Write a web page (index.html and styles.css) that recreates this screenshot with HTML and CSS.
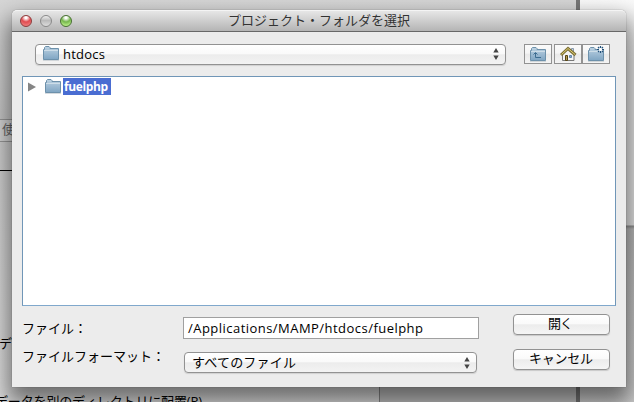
FILE: index.html
```html
<!DOCTYPE html>
<html lang="ja">
<head>
<meta charset="utf-8">
<title>プロジェクト・フォルダを選択</title>
<link rel="stylesheet" href="styles.css">
</head>
<body>
<svg width="0" height="0" class="defs">
  <defs>
    <linearGradient id="blue" x1="0" y1="0" x2="0" y2="1"><stop offset="0" stop-color="#bdd2e2"/><stop offset="1" stop-color="#7fa5c3"/></linearGradient>
    <symbol id="folder" viewBox="0 0 16 15">
      <path d="M.5 13.5V3.5H1.5V1.5L2.5.5H6L7 1.5V2.5H15.5V13.5Z" fill="url(#blue)" stroke="#6d91ab"/>
      <path d="M1 4.5H15" stroke="#cddde8"/><path d="M0 14.5H16" stroke="#bbc4ca" opacity=".6"/>
    </symbol>
    <symbol id="arrows" viewBox="0 0 6 12"><path d="M.3 4.5L3 0L5.7 4.5ZM.3 7.5L3 12L5.7 7.5Z" fill="#444"/></symbol>
  </defs>
</svg>
<div class="desktop">
  <div class="back left"></div>
  <div class="back right"></div>
  <div class="back-toolbar"><span>使</span></div>
  <div class="back-rule"></div>
  <div class="back-lower"></div>
  <span class="back-text side">デ</span>
  <svg class="back-text foot" width="215" height="18"><text x="0" y="14" textLength="207">データを別のディレクトリに配置(P)</text></svg>
  <main class="dialog">
    <header class="titlebar">
      <i class="light red"></i><i class="light gray"></i><i class="light green"></i>
      <h1><svg width="184" height="18"><text x="0" y="14" textLength="182" lengthAdjust="spacingAndGlyphs">プロジェクト・フォルダを選択</text></svg></h1>
    </header>
    <div class="tools">
      <div class="select path"><svg class="folder" width="16" height="15"><use href="#folder"/></svg><svg width="50" height="19"><text x="-1" y="14" textLength="42">htdocs</text></svg><svg class="arrows" width="6" height="12"><use href="#arrows"/></svg></div>
      <button class="tool up"><svg width="16" height="15"><use href="#folder"/><path d="M5.5 6V10.5H11M3.5 7.5L5.5 5.5L7.5 7.5" fill="none" stroke="#3d6d91"/></svg></button>
      <button class="tool home"><svg width="17" height="15" viewBox="0 0 17 15"><path d="M11.5 1.5H13.5V6H11.5Z" fill="#c8d6e4" stroke="#8798aa"/><path d="M2.5 7L8 2L14 7V13.5H2.5Z" fill="#f4f4f4" stroke="#777"/><path d="M5.5 8.5H7.5V13.5H5.5Z" fill="#b29c51" stroke="#574413"/><path d="M9.5 8.5H11.5V10.5H9.5Z" fill="#86a9cc" stroke="#6589ae"/><path d="M1 8L8 1.5L15.5 8" fill="none" stroke="#7d7038" stroke-width="3"/><path d="M1.5 7.5L8 1.5L15 7.5" fill="none" stroke="#dfcf70"/></svg></button>
      <button class="tool new"><svg width="17" height="16" viewBox="0 -1 17 16"><use href="#folder" width="16" height="15"/><circle cx="12.5" cy="2.5" r="2.5" fill="#e8f0f6"/><path d="M12.5-1V1M12.5 4V6M9 2.5H11M14 2.5H16M10 0L11.3 1.3M15 5L13.7 3.7M15 0L13.7 1.3M10 5L11.3 3.7" stroke="#24527a" stroke-width="1.2"/><circle cx="12.5" cy="2.5" r="1.5" fill="#fff"/></svg></button>
    </div>
    <section class="files">
      <div class="row"><svg class="disclosure" width="8" height="10"><path d="M0 .5L8 5L0 9.5Z" fill="#858585"/></svg><svg width="16" height="15"><use href="#folder"/></svg><span class="selected"><svg width="48" height="17"><text x="1" y="13" textLength="44">fuelphp</text></svg></span></div>
    </section>
    <form class="form">
      <div class="labels">
        <svg width="150" height="20"><text x="0" y="15" textLength="65">ファイル：</text></svg>
        <svg width="150" height="20"><text x="0" y="15" textLength="143">ファイルフォーマット：</text></svg>
      </div>
      <div class="fields">
        <div class="input"><svg width="250" height="20"><text x="0" y="15" textLength="235">/Applications/MAMP/htdocs/fuelphp</text></svg></div>
        <div class="select format"><svg width="110" height="19"><text x="-1" y="14" textLength="104">すべてのファイル</text></svg><svg class="arrows" width="6" height="12"><use href="#arrows"/></svg></div>
      </div>
      <div class="actions">
        <button type="button"><svg width="30" height="18"><text x="1" y="13" textLength="25">開く</text></svg></button>
        <button type="button"><svg width="66" height="18"><text x="0" y="13" textLength="64">キャンセル</text></svg></button>
      </div>
    </form>
  </main>
</div>
</body>
</html>
```
FILE: styles.css
```css
* { box-sizing: border-box; }
body { margin: 0; font: 13px/18px "Open Sans", "Noto Sans CJK JP", sans-serif; color: #000; }
svg { display: block; flex: none; overflow: visible; }
button { padding: 0; font: inherit; color: inherit; }
.defs { position: absolute; }
.desktop { position: relative; width: 634px; height: 402px; overflow: hidden; background: #777; }
.back { position: absolute; top: 0; }
.left { left: 0; width: 576px; height: 402px; background: linear-gradient(#d6d6d6, #c8c8c8 120px, #d0d0d0 140px, #dedede); }
.right { left: 576px; width: 58px; height: 402px; border-left: 4px solid #777; background: linear-gradient(#fafafa, #f4f4f4 20px, #e6e6e6 60px 225px, #909090 226px, #bcbcbc 229px, #d0d0d0); }
.back-toolbar { position: absolute; top: 119px; left: 0; width: 20px; height: 23px; border: solid #999; border-width: 1px 0; color: #666; overflow: hidden; background: #d6d6d6; }
.back-toolbar span { margin-left: 2px; }
.back-rule { position: absolute; top: 170px; width: 20px; height: 1px; background: #000; }
.back-lower { position: absolute; left: 379px; bottom: 0; width: 197px; height: 25px; background: #c4c4c4; border-left: 1px solid #888; }
.back-text { position: absolute; white-space: nowrap; }
.side { left: -1px; top: 334px; }
.foot { left: -5px; top: 392px; }
.dialog { position: absolute; left: 12px; top: 10px; width: 614px; height: 377px; background: #ececec; border-radius: 5px 5px 0 0; box-shadow: 0 0 1px 0 rgba(0,0,0,.6), 0 12px 22px 4px rgba(0,0,0,.5); }
.titlebar { position: relative; display: flex; align-items: center; gap: 8px; height: 22px; padding-left: 8px; border-bottom: 1px solid #686868; border-top: 1px solid #f4f4f4; border-radius: 5px 5px 0 0; background: linear-gradient(#e6e6e6, #b4b4b4); }
.titlebar h1 { position: absolute; left: 216px; top: 0; margin: 0; font-size: 13px; font-weight: 400; fill: #333; }
.light { width: 12px; height: 12px; border-radius: 50%; border: 1px solid #777; }
.red { border-color: #8c3b3b; background: radial-gradient(circle at 50% 15%, #fff 0 10%, #e14b50 45%, #ed7777 80%); }
.gray { border-color: #898989; background: linear-gradient(#eee, #bbb 45%, #ddd); }
.green { border-color: #476f31; background: radial-gradient(circle at 50% 15%, #fff 0 10%, #75b64c 45%, #b4ea83 80%); }
.tools { display: flex; align-items: center; height: 44px; padding-left: 23px; }
.select { display: flex; align-items: center; height: 21px; border: 1px solid #929292; border-radius: 4px; background: linear-gradient(#fff, #fafafa 45%, #ececec 52%, #f3f3f3); box-shadow: 0 1px 1px rgba(0,0,0,.12); }
.path { width: 471px; padding: 0 6px 0 7px; gap: 5px; margin-right: 18px; }
.path .folder { margin-top: -1px; }
.arrows { margin-left: auto; }
.tool { display: grid; place-items: center; width: 28px; height: 20px; border: 1px solid #929292; background: linear-gradient(#fafafa, #f5f5f5 45%, #e9e9e9 52%, #f4f4f4); }
.home { margin-left: 2px; }
.files { width: 594px; height: 230px; margin-left: 10px; background: #fff; border: 1px solid #7096b7; border-bottom-color: #80a8cc; }
.row { display: flex; align-items: center; height: 19px; padding-left: 5px; }
.disclosure { margin-right: 9px; }
.selected { margin-left: 2px; color: #fff; background: #4a6dd2; }
.selected svg { fill: #fff; font-size: 12px; font-weight: 700; }
.form { display: flex; margin: 0; padding: 8px 0 0 10px; }
.labels { width: 161px; padding-top: 4px; display: grid; align-content: start; gap: 8px; }
.fields { width: 330px; padding-top: 3px; }
.input { width: 296px; height: 22px; padding-left: 4px; background: #fff; border: 1px solid #a0a0a0; }
.format { width: 293px; margin: 13px 0 0 1px; padding: 0 6px 0 8px; }
.actions { display: grid; gap: 14px; align-content: start; }
.actions button { display: flex; justify-content: center; width: 97px; height: 21px; border: 1px solid #929292; border-radius: 4px; background: linear-gradient(#fff, #fafafa 45%, #ececec 52%, #f5f5f5); box-shadow: 0 1px 1px rgba(0,0,0,.15); }
```
